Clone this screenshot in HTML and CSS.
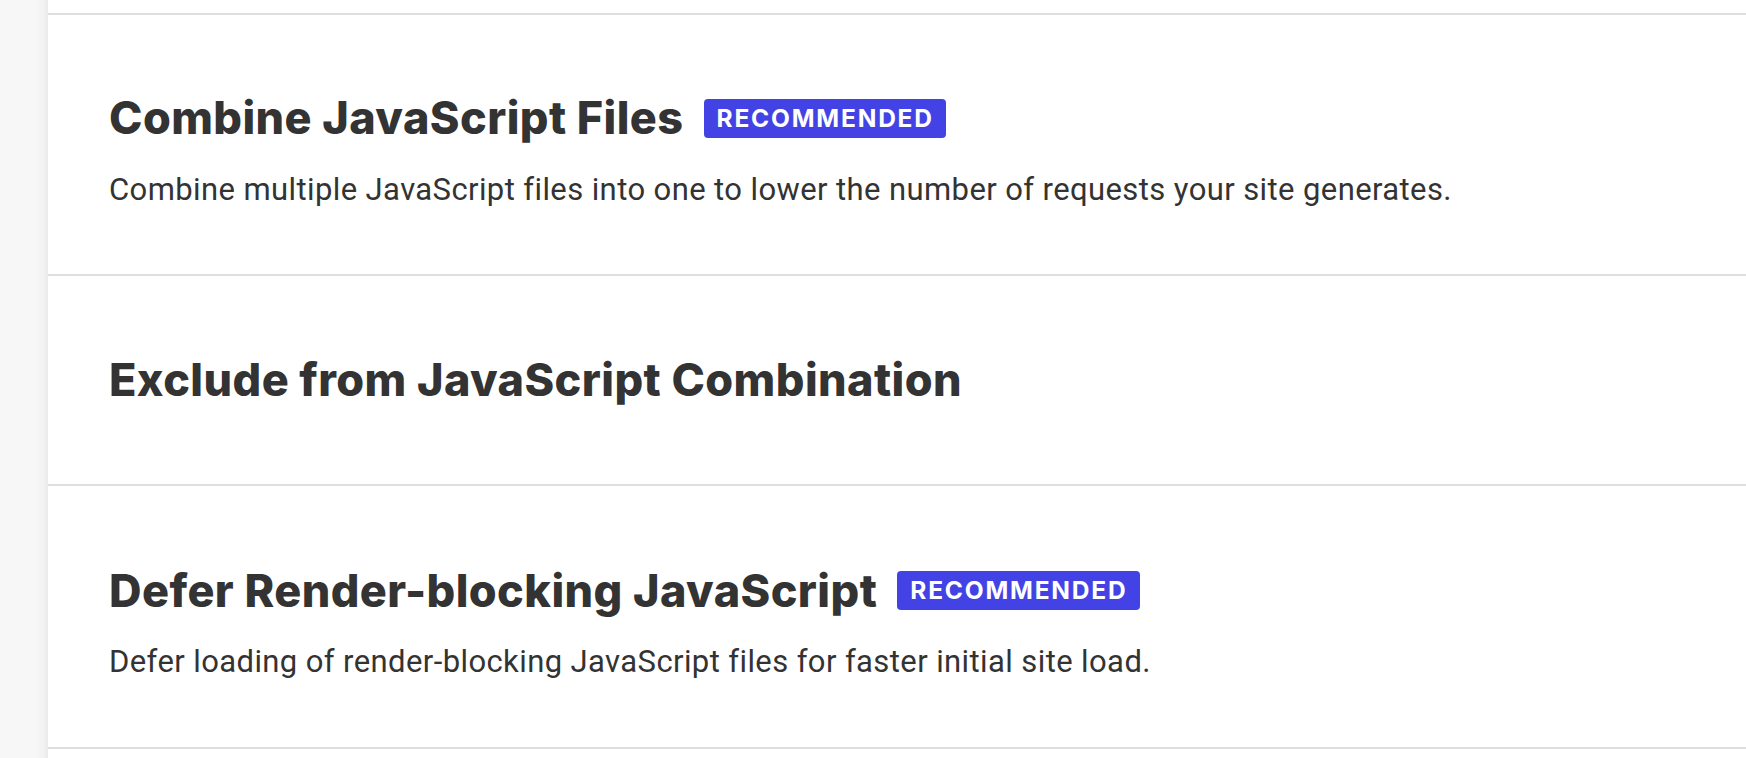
FILE: index.html
```html
<!DOCTYPE html>
<html lang="en">
<head>
<meta charset="utf-8">
<title>JavaScript Optimization</title>
<link rel="stylesheet" href="styles.css">
</head>
<body>
<div class="layout">
  <aside class="sidebar"></aside>
  <main class="main">
    <section class="option">
      <div class="option-head">
        <h2 class="option-title">Combine JavaScript Files</h2>
        <span class="badge">RECOMMENDED</span>
      </div>
      <p class="option-desc">Combine multiple JavaScript files into one to lower the number of requests your site generates.</p>
    </section>
    <section class="option option-solo">
      <div class="option-head">
        <h2 class="option-title">Exclude from JavaScript Combination</h2>
      </div>
    </section>
    <section class="option option-last">
      <div class="option-head">
        <h2 class="option-title">Defer Render-blocking JavaScript</h2>
        <span class="badge">RECOMMENDED</span>
      </div>
      <p class="option-desc">Defer loading of render-blocking JavaScript files for faster initial site load.</p>
    </section>
  </main>
</div>
</body>
</html>
```
FILE: styles.css
```css
html, body {
  margin: 0;
  padding: 0;
  height: 100%;
  overflow: hidden;
}
body {
  background: #ffffff;
  color: #333333;
  font-family: Roboto, "Liberation Sans", sans-serif;
}
.layout {
  display: flex;
  height: 100vh;
}
.sidebar {
  width: 48px;
  flex: none;
  background: linear-gradient(to right, #f7f7f7 0%, #f7f7f7 72%, #f1f1f1 92%, #e9e9e9 100%);
}
.main {
  flex: 1;
  background: #ffffff;
  padding-top: 13px;
}
.option {
  border-top: 2px solid #dedede;
  padding: 74px 0 63px 61px;
}
.option-solo {
  padding-top: 75px;
  padding-bottom: 74.5px;
}
.option-last {
  padding-top: 76px;
  padding-bottom: 64px;
  border-bottom: 2px solid #dedede;
}
.option-head {
  display: flex;
  align-items: center;
  gap: 20px;
}
.option-title {
  margin: 0;
  font-family: Inter, "Open Sans", sans-serif;
  font-weight: 800;
  font-size: 45px;
  line-height: 58.5px;
  color: #333333;
  letter-spacing: 0.42px;
}
.badge {
  display: inline-block;
  background: #4343e5;
  color: #ffffff;
  font-family: Inter, "Open Sans", sans-serif;
  font-weight: 700;
  font-size: 24.5px;
  line-height: 39px;
  letter-spacing: 1.8px;
  padding: 0 12px 0 13px;
  border-radius: 4px;
}
.option-desc {
  margin: 21px 0 0;
  font-family: Roboto, "Liberation Sans", sans-serif;
  font-size: 31px;
  line-height: 42px;
  letter-spacing: 0.4px;
  color: #333333;
}
```
